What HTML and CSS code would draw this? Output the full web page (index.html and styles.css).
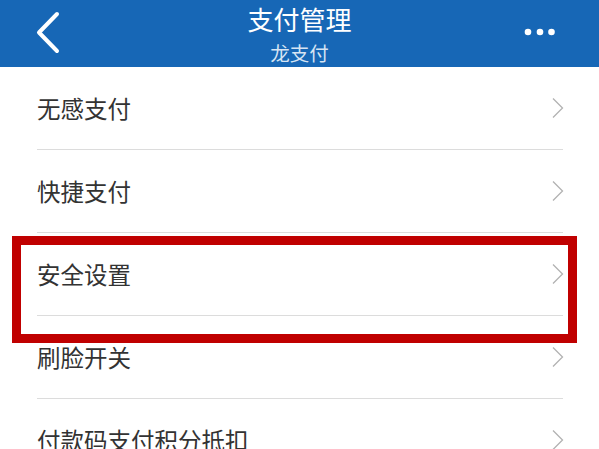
FILE: index.html
```html
<!DOCTYPE html>
<html lang="zh-CN">
<head>
<meta charset="utf-8">
<title>支付管理</title>
<link rel="stylesheet" href="styles.css">
</head>
<body>
<div class="page">
  <header class="topbar">
    <div class="back">
      <svg width="26" height="43" viewBox="0 0 26 43"><polyline points="22,3 4,21.5 22,40" fill="none" stroke="#fff" stroke-width="4" stroke-linecap="round" stroke-linejoin="round"/></svg>
    </div>
    <div class="titles">
      <div class="title">支付管理</div>
      <div class="subtitle">龙支付</div>
    </div>
    <div class="more">
      <svg width="34" height="10" viewBox="0 0 34 10"><circle cx="5" cy="5" r="3.3" fill="#fff"/><circle cx="17" cy="5" r="3.3" fill="#fff"/><circle cx="28.5" cy="5" r="3.3" fill="#fff"/></svg>
    </div>
  </header>
  <ul class="list">
    <li class="row"><span class="label">无感支付</span><svg class="chev" width="12" height="22" viewBox="0 0 12 22"><polyline points="1,1.5 10.5,11 1,20.5" fill="none" stroke="#b2b2b2" stroke-width="1.3"/></svg></li>
    <li class="row"><span class="label">快捷支付</span><svg class="chev" width="12" height="22" viewBox="0 0 12 22"><polyline points="1,1.5 10.5,11 1,20.5" fill="none" stroke="#b2b2b2" stroke-width="1.3"/></svg></li>
    <li class="row"><span class="label">安全设置</span><svg class="chev" width="12" height="22" viewBox="0 0 12 22"><polyline points="1,1.5 10.5,11 1,20.5" fill="none" stroke="#b2b2b2" stroke-width="1.3"/></svg></li>
    <li class="row"><span class="label">刷脸开关</span><svg class="chev" width="12" height="22" viewBox="0 0 12 22"><polyline points="1,1.5 10.5,11 1,20.5" fill="none" stroke="#b2b2b2" stroke-width="1.3"/></svg></li>
    <li class="row"><span class="label">付款码支付积分抵扣</span><svg class="chev" width="12" height="22" viewBox="0 0 12 22"><polyline points="1,1.5 10.5,11 1,20.5" fill="none" stroke="#b2b2b2" stroke-width="1.3"/></svg></li>
  </ul>
  <div class="highlight"></div>
</div>
</body>
</html>
```

FILE: styles.css
```css
* { box-sizing: border-box; }
html, body {
  margin: 0;
  padding: 0;
  background: #fff;
  overflow: hidden;
}
body {
  font-family: "Noto Sans CJK SC", "Noto Sans", sans-serif;
  width: 599px;
  height: 449px;
}
.page {
  position: relative;
  width: 599px;
  height: 449px;
  overflow: hidden;
}
.topbar {
  height: 67px;
  background: #1767b6;
  display: grid;
  grid-template-columns: 120px 1fr 120px;
}
.back {
  padding: 11px 0 0 35px;
}
.back svg { display: block; }
.titles {
  display: flex;
  flex-direction: column;
  align-items: center;
  padding-top: 3px;
}
.title {
  color: #fff;
  font-size: 26px;
  line-height: 32px;
}
.subtitle {
  color: #d6e4f3;
  font-size: 19.5px;
  line-height: 24px;
  margin-top: 6px;
}
.more {
  display: flex;
  justify-content: flex-start;
  padding: 27px 0 0 44px;
}
.more svg { display: block; }
.list {
  list-style: none;
  margin: 0;
  padding: 0;
}
.row {
  height: 83px;
  margin: 0 36px 0 37px;
  border-bottom: 1px solid #dcdcdc;
  display: flex;
  align-items: center;
  justify-content: space-between;
}
.label {
  color: #333;
  font-size: 23.5px;
  line-height: 30px;
}
.chev {
  display: block;
  margin-right: -1px;
}
.highlight {
  position: absolute;
  left: 12px;
  top: 236px;
  width: 565px;
  height: 107px;
  border: 9px solid #c00000;
}
```
